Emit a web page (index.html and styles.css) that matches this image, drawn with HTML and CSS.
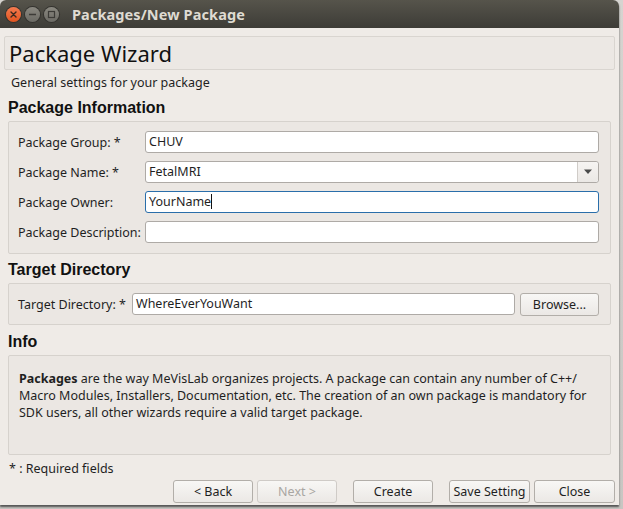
FILE: index.html
```html
<!DOCTYPE html>
<html>
<head>
<meta charset="utf-8">
<link rel="stylesheet" href="styles.css">
</head>
<body>
<div class="screen">
  <div class="window">
    <div class="titlebar">
      <div class="wbtns">
        <span class="wbtn close"><svg width="15" height="15" viewBox="0 0 15 15"><path d="M5 5 L10 10 M10 5 L5 10" stroke="#3a2a20" stroke-width="1.4" stroke-linecap="round"/></svg></span>
        <span class="wbtn"><svg width="15" height="15" viewBox="0 0 15 15"><path d="M4 7.5 H11" stroke="#3c3b37" stroke-width="1.5"/></svg></span>
        <span class="wbtn"><svg width="15" height="15" viewBox="0 0 15 15"><rect x="4.5" y="4.5" width="6" height="6" fill="none" stroke="#3c3b37" stroke-width="1.2"/></svg></span>
      </div>
      <div class="wtitle">Packages/New Package</div>
    </div>
    <div class="body">
      <div class="header">Package Wizard</div>
      <div class="subtitle">General settings for your package</div>

      <div class="gtitle">Package Information</div>
      <div class="group form">
        <div class="row"><label>Package Group: *</label><div class="input">CHUV</div></div>
        <div class="row"><label>Package Name: *</label><div class="input combo"><span class="ctext">FetalMRI</span><span class="arrow"><svg width="10" height="6" viewBox="0 0 10 6"><path d="M1 0.5 H9 L5 5 Z" fill="#4a4a4a"/></svg></span></div></div>
        <div class="row"><label>Package Owner:</label><div class="input focus">YourName<span class="caret"></span></div></div>
        <div class="row"><label>Package Description:</label><div class="input"></div></div>
      </div>

      <div class="gtitle">Target Directory</div>
      <div class="group tdir">
        <label>Target Directory: *</label><div class="input grow">WhereEverYouWant</div><button class="btn browse">Browse...</button>
      </div>

      <div class="gtitle info-title">Info</div>
      <div class="group info">
        <p><b>Packages</b> are the way MeVisLab organizes projects. A package can contain any number of C++/ Macro Modules, Installers, Documentation, etc. The creation of an own package is mandatory for SDK users, all other wizards require a valid target package.</p>
      </div>

      <div class="req">* : Required fields</div>
      <div class="buttons">
        <button class="btn">&lt; Back</button>
        <button class="btn disabled">Next &gt;</button>
        <button class="btn create">Create</button>
        <button class="btn save">Save Setting</button>
        <button class="btn close">Close</button>
      </div>
    </div>
  </div>
</div>
</body>
</html>
```

FILE: styles.css
```css
html, body {
  margin: 0;
  padding: 0;
  background: #d9d7d3;
}
.screen {
  width: 623px;
  height: 509px;
  overflow: hidden;
  background: linear-gradient(#d6d4d0, #c8c6c2);
}
.window {
  width: 619px;
  height: 505px;
  background: #efebe7;
  border-radius: 6px 6px 0 0;
  box-shadow: 0 2px 2px #555;
  font-family: "Noto Sans", "Open Sans", sans-serif;
  font-size: 12.5px;
  color: #1f1f1f;
  display: flex;
  flex-direction: column;
}
.titlebar {
  height: 28px;
  flex: none;
  background: linear-gradient(#56544b, #3d3c37);
  border-radius: 6px 6px 0 0;
  display: flex;
  align-items: center;
  padding-left: 6px;
}
.wbtns { display: flex; gap: 2px; }
.wbtn {
  width: 15px;
  height: 15px;
  border-radius: 50%;
  background: linear-gradient(#8a8880, #6b6a64);
  box-shadow: 0 0 0 1px #34332f;
  display: block;
}
.wbtn svg { display: block; }
.wbtn.close { background: linear-gradient(#f47a4f, #e25520); }
.wbtn + .wbtn { margin-left: 2px; }
.wtitle {
  margin-left: 13px;
  color: #dfdbd2;
  font-family: "Noto Sans", sans-serif;
  font-weight: bold;
  font-size: 14.5px;
  letter-spacing: 0.1px;
}
.body {
  padding: 8px 4px 0 4px;
  display: flex;
  flex-direction: column;
}
.header {
  height: 32px;
  border: 1px solid #d9d5d0;
  border-radius: 2px;
  background: #ece8e4;
  font-size: 22px;
  line-height: 32px;
  padding-left: 4px;
  color: #111;
}
.subtitle {
  margin: 4px 0 0 7px;
  font-size: 12.5px;
  height: 18px;
  line-height: 18px;
}
.gtitle {
  margin: 6px 0 0 4px;
  font-family: "Liberation Sans", Arial, sans-serif;
  font-weight: bold;
  font-size: 16px;
  height: 20px;
  line-height: 20px;
  color: #111;
}
.gtitle.info-title { margin-top: 7px; }
.group {
  margin: 0 4px 0 4px;
  border: 1px solid #d6d2cd;
  border-radius: 2px;
  background: #ebe7e3;
}
.form {
  padding: 9px 11px 10px 9px;
  display: flex;
  flex-direction: column;
  gap: 8px;
}
.row {
  display: flex;
  align-items: center;
  height: 22px;
}
.row label { width: 127px; flex: none; }
.input {
  flex: 1;
  height: 20px;
  line-height: 20px;
  border: 1px solid #aeaaa6;
  border-radius: 3px;
  background: #fff;
  padding-left: 3px;
  box-sizing: content-box;
  white-space: nowrap;
  position: relative;
}
.input.focus {
  border-color: #2a6eaa;
}
.caret {
  display: inline-block;
  width: 1px;
  height: 15px;
  background: #111;
  vertical-align: -3px;
}
.combo { display: flex; padding-left: 0; }
.ctext { flex: 1; padding-left: 3px; }
.arrow {
  width: 20px;
  border-left: 1px solid #d0ccc8;
  background: linear-gradient(#f6f4f2, #ebe8e5);
  border-radius: 0 3px 3px 0;
  display: flex;
  align-items: center;
  justify-content: center;
}
.gtitle + .group { margin-top: 3px; }
.tdir {
  padding: 9px 11px 9px 9px;
  display: flex;
  align-items: center;
  height: 22px;
}
.tdir label { width: 114px; flex: none; }
.btn {
  font-family: "Noto Sans", "Open Sans", sans-serif;
  font-size: 12.5px;
  color: #1f1f1f;
  height: 23px;
  border: 1px solid #b2aea9;
  border-radius: 3px;
  background: linear-gradient(#f8f7f5, #ebe8e5);
  padding: 0;
  width: 80px;
}
.browse { margin-left: 5px; width: 79px; }
.info {
  height: 98px;
  padding: 0 10px;
}
.info p {
  margin: 14px 0 0 0;
  line-height: 17px;
}
.info b { font-weight: bold; }
.req {
  margin: 5px 0 0 5px;
  height: 18px;
  line-height: 18px;
}
.buttons {
  display: flex;
  justify-content: flex-end;
  margin-top: 2px;
  gap: 4px;
}
.btn.disabled { color: #a9a6a2; border-color: #cfcbc7; }
.btn.create { margin-left: 12px; }
.btn.save { margin-left: 12px; width: 81px; }
.btn.close { width: 81px; }
```
